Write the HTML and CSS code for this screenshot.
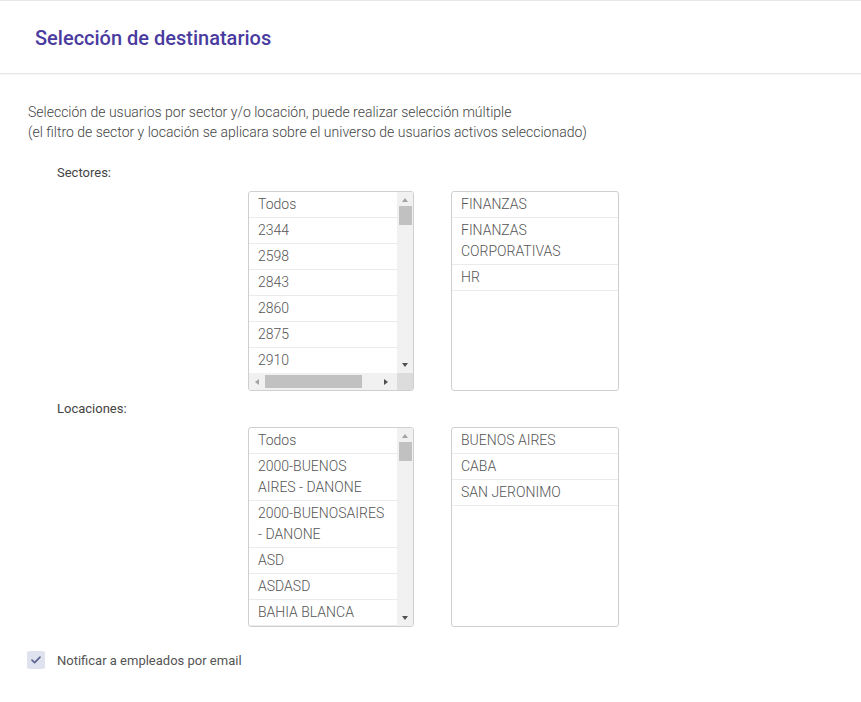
FILE: index.html
```html
<!DOCTYPE html>
<html lang="es">
<head>
<meta charset="utf-8">
<title>Selección de destinatarios</title>
<link rel="stylesheet" href="styles.css">
</head>
<body>
<div class="page">
  <header class="header">
    <h1 class="title">Selección de destinatarios</h1>
  </header>
  <main class="content">
    <p class="desc">Selección de usuarios por sector y/o locación, puede realizar selección múltiple<br>(el filtro de sector y locación se aplicara sobre el universo de usuarios activos seleccionado)</p>

    <div class="group">
      <div class="group-label">Sectores:</div>
      <div class="lists">
        <div class="listbox has-h">
          <div class="lb-main">
            <ul class="items">
              <li>Todos</li>
              <li>2344</li>
              <li>2598</li>
              <li>2843</li>
              <li>2860</li>
              <li>2875</li>
              <li>2910</li>
            </ul>
            <div class="vbar">
              <span class="arrow up"></span>
              <span class="vthumb"></span>
              <span class="vspace"></span>
              <span class="arrow down"></span>
            </div>
          </div>
          <div class="hrow">
            <div class="hbar">
              <span class="arrow left"></span>
              <span class="hthumb"></span>
              <span class="hspace"></span>
              <span class="arrow right"></span>
            </div>
            <div class="corner"></div>
          </div>
        </div>
        <div class="listbox selected">
          <ul class="items">
            <li>FINANZAS</li>
            <li>FINANZAS<br>CORPORATIVAS</li>
            <li>HR</li>
          </ul>
        </div>
      </div>
    </div>

    <div class="group">
      <div class="group-label">Locaciones:</div>
      <div class="lists">
        <div class="listbox">
          <div class="lb-main">
            <ul class="items">
              <li>Todos</li>
              <li>2000-BUENOS<br>AIRES - DANONE</li>
              <li>2000-BUENOSAIRES<br>- DANONE</li>
              <li>ASD</li>
              <li>ASDASD</li>
              <li>BAHIA BLANCA</li>
            </ul>
            <div class="vbar">
              <span class="arrow up"></span>
              <span class="vthumb"></span>
              <span class="vspace"></span>
              <span class="arrow down"></span>
            </div>
          </div>
        </div>
        <div class="listbox selected">
          <ul class="items">
            <li>BUENOS AIRES</li>
            <li>CABA</li>
            <li>SAN JERONIMO</li>
          </ul>
        </div>
      </div>
    </div>

    <label class="check">
      <span class="box">
        <svg width="12" height="10" viewBox="0 0 12 10"><path d="M2 5.2 L4.6 7.6 L10 2.2" fill="none" stroke="#5d6391" stroke-width="1.7" stroke-linecap="round" stroke-linejoin="round"/></svg>
      </span>
      <span class="check-text">Notificar a empleados por email</span>
    </label>
  </main>
</div>
</body>
</html>
```

FILE: styles.css
```css
* { box-sizing: border-box; }
html, body { margin: 0; padding: 0; background: #fff; }
body {
  font-family: Roboto, "Liberation Sans", Arial, sans-serif;
  color: #555;
}
.page {
  width: 861px;
  height: 702px;
  border-top: 1px solid #e6e6e6;
}
.header {
  height: 73px;
  display: flex;
  align-items: center;
  padding-left: 35px;
  border-bottom: 1px solid #e6e6e6;
  box-shadow: 0 1px 1px rgba(0,0,0,0.03);
}
.title {
  margin: 0;
  font-size: 20px;
  font-weight: 500;
  color: #4a3b9f;
  letter-spacing: 0;
  padding-top: 1px;
}
.content {
  padding: 28px 0 0 28px;
}
.desc {
  margin: 0;
  font-size: 14px;
  line-height: 20px;
  font-weight: 300;
  color: #444;
}
.group {
  display: flex;
  flex-direction: column;
}
.group-label {
  margin-left: 29px;
  font-size: 13px;
  line-height: 18px;
  color: #444;
  font-weight: 400;
}
.group:nth-of-type(1) .group-label { margin-top: 22px; }
.group:nth-of-type(2) .group-label { margin-top: 9px; }
.lists {
  display: flex;
  gap: 36px;
  margin-left: 220px;
  margin-top: 9px;
}
.listbox {
  width: 166px;
  height: 200px;
  border: 1px solid #cfcfcf;
  border-radius: 3px;
  overflow: hidden;
  display: flex;
  flex-direction: column;
  background: #fff;
}
.listbox.selected {
  width: 168px;
  margin-left: 1px;
}
.lb-main {
  display: flex;
  flex: 1;
  min-height: 0;
}
.items {
  list-style: none;
  margin: 0;
  padding: 0;
  flex: 1;
  min-width: 0;
  overflow: hidden;
}
.items li {
  font-size: 14px;
  line-height: 21px;
  font-weight: 300;
  color: #555;
  padding: 2px 8px 2px 9px;
  border-bottom: 1px solid #ebebeb;
  white-space: nowrap;
}
.vbar {
  width: 16px;
  background: #f1f1f1;
  display: flex;
  flex-direction: column;
  align-items: center;
}
.vthumb {
  width: 13px;
  height: 19px;
  background: #c1c1c1;
  margin-top: 1px;
}
.vspace { flex: 1; }
.arrow {
  width: 0; height: 0;
  display: block;
  border-style: solid;
}
.arrow.up {
  margin-top: 6px;
  margin-bottom: 3px;
  border-width: 0 3.5px 4px 3.5px;
  border-color: transparent transparent #a3a3a3 transparent;
}
.arrow.down {
  margin-bottom: 6px;
  border-width: 4px 3.5px 0 3.5px;
  border-color: #505050 transparent transparent transparent;
}
.hrow {
  display: flex;
  height: 17px;
}
.hbar {
  flex: 1;
  background: #f1f1f1;
  display: flex;
  align-items: center;
}
.arrow.left {
  margin-left: 6px;
  margin-right: 6px;
  border-width: 3.5px 4px 3.5px 0;
  border-color: transparent #a3a3a3 transparent transparent;
}
.arrow.right {
  margin-right: 9px;
  border-width: 3.5px 0 3.5px 4px;
  border-color: transparent transparent transparent #505050;
}
.hthumb {
  width: 97px;
  height: 13px;
  background: #c1c1c1;
}
.hspace { flex: 1; }
.corner {
  width: 16px;
  background: #dcdcdc;
}
.check {
  display: flex;
  align-items: center;
  gap: 12px;
  margin-top: 24px;
  margin-left: -1px;
}
.box {
  width: 18px;
  height: 18px;
  border-radius: 2px;
  background: #dfe2ef;
  display: flex;
  align-items: center;
  justify-content: center;
}
.check-text {
  font-size: 13px;
  color: #555;
  font-weight: 400;
}
```
